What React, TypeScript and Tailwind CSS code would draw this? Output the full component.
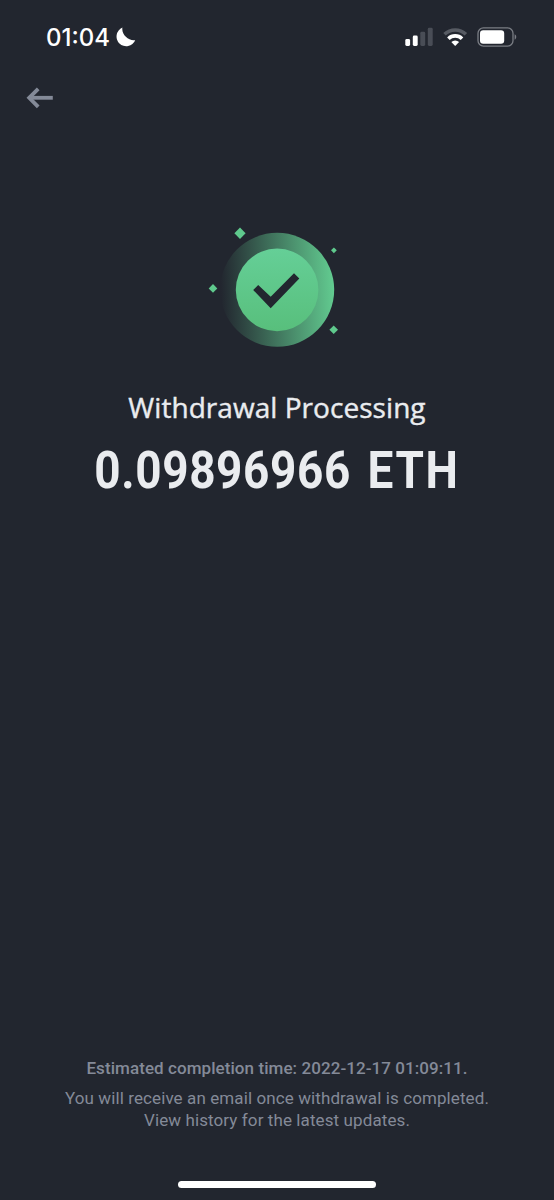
import type {ReactNode} from "react";

// ── Status bar ───────────────────────────────────────────────────────────────

function StatusBar() {
  return (
    <header className="flex h-[74px] items-center justify-between pl-[46px] pr-[37px]">
      <div className="flex items-center gap-[6px]">
        <span className="pt-px font-['Inter',sans-serif] text-[24px] font-medium leading-none text-white">
          01:04
        </span>
        <svg width="20" height="20" viewBox="0 0 20 20" fill="#fff">
          <path d="M6.4.6A9.7 9.7 0 1 0 19.2 13.2C12.8 14.4 5.2 7.6 6.4.6Z" />
        </svg>
      </div>

      <div className="flex items-center">
        <svg width="28" height="20" viewBox="0 0 28 20" fill="#fff">
          <rect x=".3" y="12" width="4.8" height="7" rx="1.4" />
          <rect x="7.8" y="8.6" width="4.9" height="10.4" rx="1.4" />
          <g fill="#494d56">
            <rect x="15.3" y="4.8" width="4.9" height="14.2" rx="1.4" />
            <rect x="22.8" y=".8" width="4.9" height="18.2" rx="1.4" />
          </g>
        </svg>
        <svg
          className="ml-[10px]"
          width="25"
          height="20"
          viewBox="0 0 25 20"
          fill="none"
          strokeWidth="3.6">
          <path d="M1.5 7.3a15.5 15.5 0 0 1 21.4 0" stroke="#575b63" />
          <path d="M5.4 11.7a9.7 9.7 0 0 1 13.6 0" stroke="#fff" />
          <path d="M8.3 15a5.8 5.8 0 0 1 7.8 0L12.2 19Z" fill="#fff" />
        </svg>
        <svg className="ml-[9px]" width="40" height="20" viewBox="0 0 40 20">
          <rect
            x="1"
            y=".9"
            width="35"
            height="18.2"
            rx="5.4"
            fill="none"
            stroke="#7a7d84"
            strokeWidth="1.3"
          />
          <rect x="3" y="3.2" width="24.2" height="13.6" rx="3.2" fill="#fff" />
          <path d="M37.6 7.3c2.2.8 2.2 4.6 0 5.4Z" fill="#7a7d84" />
        </svg>
      </div>
    </header>
  );
}

// ── Success badge ────────────────────────────────────────────────────────────

function SuccessBadge() {
  return (
    <svg className="mr-1.5" width="160" height="150" viewBox="0 0 160 150">
      <defs>
        <linearGradient id="halo" x1="27" y1="78" x2="140" y2="74" gradientUnits="userSpaceOnUse">
          <stop offset="0" stopColor="#62cb90" stopOpacity="0" />
          <stop offset="1" stopColor="#62cb90" />
        </linearGradient>
        <linearGradient id="disc" x1="0" y1="0" x2="0" y2="1">
          <stop offset="0" stopColor="#65cf97" />
          <stop offset="1" stopColor="#58bf7c" />
        </linearGradient>
      </defs>
      <circle cx="83.2" cy="75.8" r="57" fill="url(#halo)" />
      <circle cx="83.1" cy="75.9" r="41.3" fill="url(#disc)" />
      <path
        d="M59.2 76 64.2 71l12.5 11.8L100 59.3l5.3 5.3L76.7 94.3Z"
        fill="#22262f"
      />
      <g fill="#5fc98d">
        <path d="M46 13.6l5.6 5.7L46 25l-5.6-5.7Z" />
        <path d="M19 70.1l4.3 4.3-4.3 4.3-4.3-4.3Z" />
        <path d="M139.9 33.4l2.9 2.9-2.9 2.9-2.9-2.9Z" />
        <path d="M139.7 111.4l4.3 4.3-4.3 4.3-4.3-4.3Z" />
      </g>
    </svg>
  );
}

function Line({className = "", children}: {className?: string; children: ReactNode}) {
  return <p className={`whitespace-nowrap ${className}`}>{children}</p>;
}

// ── Screen ───────────────────────────────────────────────────────────────────

export default function App() {
  return (
    <div className="flex h-[1200px] w-[554px] flex-col overflow-hidden bg-[#22262f] font-['Roboto',sans-serif]">
      <StatusBar />

      <nav className="flex h-12 items-center pl-[26px]">
        <button type="button" aria-label="Back">
          <svg
            width="28"
            height="24"
            viewBox="0 0 28 24"
            fill="none"
            stroke="#848a98"
            strokeWidth="3.8">
            <path d="M3 11.8H26.8" />
            <path d="M12.2 2.8 3.2 11.8l9 9" />
          </svg>
        </button>
      </nav>

      <main className="flex flex-1 flex-col items-center pt-[92px]">
        <SuccessBadge />
        <Line className="mt-[26px] font-['Open_Sans',sans-serif] text-[28px] leading-[34px] tracking-[0.05px] text-[#eaecef] [-webkit-text-stroke:0.4px_#eaecef]">
          Withdrawal Processing
        </Line>
        <h1 className="mt-[17px] scale-x-90 whitespace-nowrap text-[51px] font-bold leading-[60px] tracking-[0.7px] text-[#eaecef]">
          0.09896966
          <span className="ml-1 tracking-[1.8px]"> ETH</span>
        </h1>
      </main>

      <footer className="flex flex-col items-center text-[17px] leading-[22px] text-[#848a98]">
        <Line className="font-medium tracking-[0.07px]">
          Estimated completion time: 2022-12-17 01:09:11.
        </Line>
        <Line className="mt-2 tracking-[0.1px]">
          You will receive an email once withdrawal is completed.
        </Line>
        <Line className="tracking-[0.1px]">View history for the latest updates.</Line>
        <div className="mb-[12px] mt-[50px] h-[7px] w-[198px] rounded-full bg-white" />
      </footer>
    </div>
  );
}
